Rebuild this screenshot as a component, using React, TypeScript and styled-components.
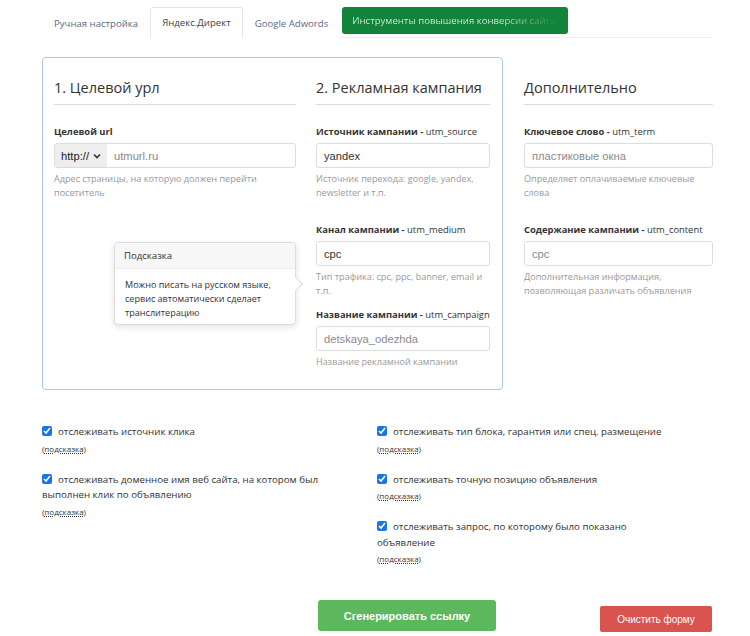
import React from "react";
import styled, { createGlobalStyle } from "styled-components";

const Global = createGlobalStyle`
  html, body { margin: 0; padding: 0; background: #fff; }
  body { font-family: "Open Sans", "Liberation Sans", sans-serif; color: #333; }
  * { box-sizing: border-box; }
`;

const Page = styled.div`
  padding: 7px 37px 0 42px;
  width: 750px;
`;

const Tabs = styled.div`
  display: flex;
  align-items: flex-end;
  height: 31px;
  border-bottom: 1px solid #eee;
`;

const Tab = styled.div<{ $active?: boolean }>`
  height: ${(p) => (p.$active ? "31px" : "30px")};
  padding: 0 ${(p) => (p.$active ? "11px" : "11px")};
  display: flex;
  align-items: center;
  font-size: 9.6px;
  color: ${(p) => (p.$active ? "#444" : "#5a6a7e")};
  border: 1px solid ${(p) => (p.$active ? "#e6e6e6" : "transparent")};
  border-bottom-color: ${(p) => (p.$active ? "#fff" : "transparent")};
  border-radius: 3px 3px 0 0;
  margin-bottom: -1px;
  background: #fff;
  white-space: nowrap;
`;

const PromoTab = styled.div`
  margin-left: 2px;
  align-self: flex-start;
  height: 27px;
  width: 226px;
  padding: 0 10px;
  display: flex;
  align-items: center;
  background: #12833a;
  border-radius: 3px;
  font-size: 9.6px;
`;

const FadeText = styled.span`
  background: linear-gradient(to right, #dfeee3 0%, #dfeee3 72%, #2e8a47 98%);
  -webkit-background-clip: text;
  background-clip: text;
  color: transparent;
  white-space: nowrap;
`;

const Main = styled.div`
  display: flex;
  margin-top: 19px;
`;

const Panel = styled.div`
  position: relative;
  width: 461px;
  height: 333px;
  border: 1px solid #a9cbe8;
  border-radius: 4px;
  padding: 0 12px 0 11px;
  display: grid;
  grid-template-columns: 242px 174px;
  column-gap: 20px;
`;

const Column = styled.div`
  display: flex;
  flex-direction: column;
`;

const Side = styled(Column)`
  margin-left: 21px;
  width: 189px;
`;

const Heading = styled.div<{ $side?: boolean }>`
  font-size: 14.5px;
  color: #333;
  padding-top: ${(p) => (p.$side ? "20px" : "19px")};
  height: ${(p) => (p.$side ? "48px" : "47px")};
  border-bottom: 1px solid #ddd;
  margin-bottom: 20px;
  line-height: 22px;
  white-space: nowrap;
`;

const Field = styled.div<{ $gap?: number }>`
  display: flex;
  flex-direction: column;
  margin-bottom: ${(p) => p.$gap ?? 0}px;
`;

const Label = styled.div`
  font-size: 9.4px;
  font-weight: 700;
  color: #333;
  line-height: 14px;
  margin-bottom: 4px;
  white-space: nowrap;
  span { font-weight: 400; }
`;

const InputBox = styled.div`
  height: 25px;
  border: 1px solid #ddd;
  border-radius: 3px;
  display: flex;
  align-items: center;
  overflow: hidden;
  font-family: "Liberation Sans", Arial, sans-serif;
  font-size: 11.2px;
`;

const Value = styled.span<{ $ph?: boolean }>`
  padding-left: 7px;
  color: ${(p) => (p.$ph ? "#8a8a8a" : "#333")};
`;

const Prefix = styled.div`
  height: 100%;
  width: 52px;
  background: #eee;
  display: flex;
  align-items: center;
  justify-content: space-between;
  padding: 0 6px 0 6px;
  color: #222;
`;

const Help = styled.div`
  margin-top: 4px;
  font-size: 9.1px;
  line-height: 14px;
  color: #999;
`;

const Popover = styled.div`
  position: absolute;
  left: 71px;
  top: 184px;
  width: 182px;
  height: 83px;
  background: #fff;
  border: 1px solid #ddd;
  border-radius: 4px;
  box-shadow: 0 2px 6px rgba(0, 0, 0, 0.12);
`;

const PopHead = styled.div`
  height: 26px;
  background: #f7f7f7;
  border-bottom: 1px solid #ececec;
  border-radius: 4px 4px 0 0;
  padding: 0 9px;
  display: flex;
  align-items: center;
  font-size: 9.6px;
  color: #333;
`;

const PopBody = styled.div`
  padding: 9px 10px;
  font-size: 9.05px;
  line-height: 14px;
  color: #333;
`;

const Arrow = styled.div`
  position: absolute;
  right: -6px;
  top: 36px;
  width: 10px;
  height: 10px;
  background: #fff;
  border-top: 1px solid #ddd;
  border-right: 1px solid #ddd;
  transform: rotate(45deg);
`;

const Options = styled.div`
  display: grid;
  grid-template-columns: 282px 300px;
  column-gap: 53px;
  margin-top: 34px;
`;

const OptCol = styled.div`
  display: flex;
  flex-direction: column;
  gap: 17px;
`;

const Option = styled.div`
  display: flex;
  flex-direction: column;
`;

const OptText = styled.div`
  font-size: 9.7px;
  line-height: 15.5px;
  color: #333;
  input {
    width: 10px;
    height: 10px;
    margin: 0 6px 0 0;
    vertical-align: -1px;
    accent-color: #1a73e8;
  }
`;

const Hint = styled.div`
  font-size: 8px;
  line-height: 12px;
  margin-top: 3px;
  color: #333;
  u { text-decoration: underline; text-decoration-style: dotted; }
`;

const Buttons = styled.div`
  display: flex;
  align-items: flex-start;
  margin-top: 35px;
  padding-left: 276px;
`;

const Generate = styled.button`
  width: 178px;
  height: 31px;
  border: none;
  border-radius: 3px;
  background: #5cb85c;
  color: #fff;
  font-family: "Liberation Sans", Arial, sans-serif;
  font-weight: 700;
  font-size: 11px;
`;

const Clear = styled.button`
  margin-left: 104px;
  margin-top: 6px;
  width: 112px;
  height: 26px;
  border: none;
  border-radius: 2px;
  background: #d9534f;
  color: #fff;
  font-family: "Liberation Sans", Arial, sans-serif;
  font-size: 10px;
`;

const Chevron = () => (
  <svg width="8" height="6" viewBox="0 0 8 6">
    <path d="M1 1.5 L4 4.5 L7 1.5" fill="none" stroke="#333" strokeWidth="1.6" />
  </svg>
);

const opt = (text: React.ReactNode) => (
  <Option>
    <OptText>
      <input type="checkbox" checked readOnly />
      {text}
    </OptText>
    <Hint>
      (<u>подсказка</u>)
    </Hint>
  </Option>
);

export default function App() {
  return (
    <>
      <Global />
      <Page>
        <Tabs>
          <Tab>Ручная настройка</Tab>
          <Tab $active>Яндекс.Директ</Tab>
          <Tab>Google Adwords</Tab>
          <PromoTab>
            <FadeText>Инструменты повышения конверсии сайта</FadeText>
          </PromoTab>
        </Tabs>
        <Main>
          <Panel>
            <Column>
              <Heading>1. Целевой урл</Heading>
              <Field>
                <Label>Целевой url</Label>
                <InputBox>
                  <Prefix>
                    http:// <Chevron />
                  </Prefix>
                  <Value $ph>utmurl.ru</Value>
                </InputBox>
                <Help>Адрес страницы, на которую должен перейти посетитель</Help>
              </Field>
            </Column>
            <Column>
              <Heading>2. Рекламная кампания</Heading>
              <Field $gap={23}>
                <Label>
                  Источник кампании - <span>utm_source</span>
                </Label>
                <InputBox>
                  <Value>yandex</Value>
                </InputBox>
                <Help>Источник перехода: google, yandex, newsletter и т.п.</Help>
              </Field>
              <Field $gap={10}>
                <Label>
                  Канал кампании - <span>utm_medium</span>
                </Label>
                <InputBox>
                  <Value>cpc</Value>
                </InputBox>
                <Help>Тип трафика: cpc, ppc, banner, email и т.п.</Help>
              </Field>
              <Field>
                <Label>
                  Название кампании - <span>utm_campaign</span>
                </Label>
                <InputBox>
                  <Value $ph>detskaya_odezhda</Value>
                </InputBox>
                <Help>Название рекламной кампании</Help>
              </Field>
            </Column>
            <Popover>
              <PopHead>Подсказка</PopHead>
              <PopBody>
                Можно писать на русском языке, сервис автоматически сделает транслитерацию
              </PopBody>
              <Arrow />
            </Popover>
          </Panel>
          <Side>
            <Heading $side>Дополнительно</Heading>
            <Field $gap={23}>
              <Label>
                Ключевое слово - <span>utm_term</span>
              </Label>
              <InputBox>
                <Value $ph>пластиковые окна</Value>
              </InputBox>
              <Help>Определяет оплачиваемые ключевые слова</Help>
            </Field>
            <Field>
              <Label>
                Содержание кампании - <span>utm_content</span>
              </Label>
              <InputBox>
                <Value $ph>cpc</Value>
              </InputBox>
              <Help>Дополнительная информация, позволяющая различать объявления</Help>
            </Field>
          </Side>
        </Main>
        <Options>
          <OptCol>
            {opt("отслеживать источник клика")}
            {opt("отслеживать доменное имя веб сайта, на котором был выполнен клик по объявлению")}
          </OptCol>
          <OptCol>
            {opt("отслеживать тип блока, гарантия или спец. размещение")}
            {opt("отслеживать точную позицию объявления")}
            {opt("отслеживать запрос, по которому было показано объявление")}
          </OptCol>
        </Options>
        <Buttons>
          <Generate>Сгенерировать ссылку</Generate>
          <Clear>Очистить форму</Clear>
        </Buttons>
      </Page>
    </>
  );
}
